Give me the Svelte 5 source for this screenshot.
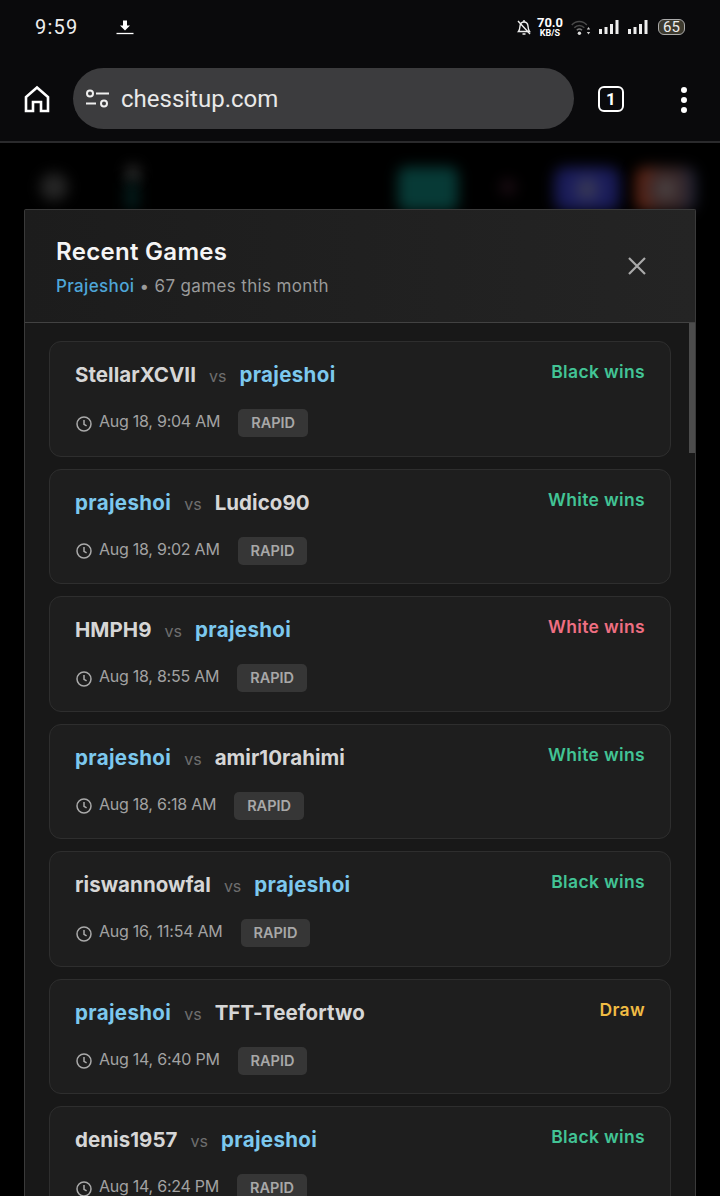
<script>
  const games = [
    { w: 'StellarXCVII', b: 'prajeshoi', youWhite: false, res: 'Black wins', kind: 'win', time: 'Aug 18, 9:04 AM' },
    { w: 'prajeshoi', b: 'Ludico90', youWhite: true, res: 'White wins', kind: 'win', time: 'Aug 18, 9:02 AM' },
    { w: 'HMPH9', b: 'prajeshoi', youWhite: false, res: 'White wins', kind: 'loss', time: 'Aug 18, 8:55 AM' },
    { w: 'prajeshoi', b: 'amir10rahimi', youWhite: true, res: 'White wins', kind: 'win', time: 'Aug 18, 6:18 AM' },
    { w: 'riswannowfal', b: 'prajeshoi', youWhite: false, res: 'Black wins', kind: 'win', time: 'Aug 16, 11:54 AM' },
    { w: 'prajeshoi', b: 'TFT-Teefortwo', youWhite: true, res: 'Draw', kind: 'draw', time: 'Aug 14, 6:40 PM' },
    { w: 'denis1957', b: 'prajeshoi', youWhite: false, res: 'Black wins', kind: 'win', time: 'Aug 14, 6:24 PM' }
  ];
</script>

<div class="screen">
  <header class="chrome">
    <div class="status">
      <span class="clock">9:59</span>
      <svg class="dl" width="18" height="16" viewBox="0 0 18 16"><path d="M7 1.500h4v5h3L9 11.500 4 6.500h3z" fill="#fff"/><path d="M.5 14.500h17" stroke="#fff" stroke-width="1.300"/></svg>
      <span class="spacer"></span>
      <svg class="bell" width="16" height="17" viewBox="0 0 16 17" fill="none" stroke="#eee" stroke-width="1.400"><path d="M2.500 12.500c1.300-1.500 1.300-3.500 1.500-5.500C4.300 4.500 6 3 8 3s3.700 1.500 4 4c.2 2 .2 4 1.500 5.500z"/><path d="M6.500 15h3M8 1v2M2 2l12 13"/></svg>
      <span class="speed"><b>70.0</b><i>KB/S</i></span>
      <svg class="wifi" width="20" height="17" viewBox="0 0 20 17" fill="none"><path d="M.8 6c4-4.800 11-4.800 15 0" stroke="#4a4a4a" stroke-width="1.500"/><path d="M3.300 8.800c3-3.200 7-3.200 10 0" stroke="#4a4a4a" stroke-width="1.500"/><path d="M5.800 11.300c1.800-1.700 3.400-1.700 5.200 0" stroke="#777" stroke-width="1.500"/><circle cx="8.400" cy="14.300" r="1.700" fill="#ddd"/><path d="M17.500 8l-1.700 2.400h3.400zM17.500 15.500l-1.700-2.400h3.400z" fill="#ccc"/></svg>
      <svg class="sig" width="20" height="16" viewBox="0 0 20 16"><g fill="#eee"><rect x="0" y="10" width="3" height="5"/><rect x="5.500" y="8" width="3" height="7"/><rect x="11" y="5" width="3" height="10"/><rect x="16.500" y="1" width="3" height="14"/></g></svg>
      <svg class="sig two" width="20" height="16" viewBox="0 0 20 16"><g fill="#eee"><rect x="0" y="10" width="3" height="5"/><rect x="5.500" y="8" width="3" height="7"/><rect x="11" y="5" width="3" height="10"/><rect x="16.500" y="1" width="3" height="14"/></g></svg>
      <span class="batt">65</span>
    </div>
    <div class="toolbar">
      <svg class="home" width="26" height="28" viewBox="0 0 26 28" fill="none" stroke="#fff" stroke-width="2.600"><path d="M2 26V12L13 2.500 24 12v14h-7v-9H9v9z"/></svg>
      <div class="omni">
        <svg width="25" height="20" viewBox="0 0 25 20" fill="none" stroke="#eee" stroke-width="2"><circle cx="5" cy="4.500" r="3"/><path d="M11 4.500h13M1 14.500h10"/><circle cx="19" cy="14.500" r="3"/></svg>
        <span>chessitup.com</span>
      </div>
      <span class="tabs">1</span>
      <span class="dots"><i></i><i></i><i></i></span>
    </div>
  </header>

  <main class="page">
    <div class="blurs" aria-hidden="true">
      <i class="b1"></i><i class="b2"></i><i class="b3"></i><i class="b4"></i><i class="b7"></i><i class="b5"></i><i class="b6"></i>
    </div>
    <section class="modal">
      <div class="mhead">
        <div>
          <h2>Recent Games</h2>
          <p><span class="who">Prajeshoi</span> • 67 games this month</p>
        </div>
        <svg width="20" height="20" viewBox="0 0 20 20" stroke="#aaa" stroke-width="2.200" fill="none"><path d="M2 2l16 16M18 2L2 18"/></svg>
      </div>
      <div class="list">
        <div class="thumb"></div>
        {#each games as g}
          <article class="card">
            <div class="top">
              <div class="players">
                <span class:you={g.youWhite}>{g.w}</span>
                <em>vs</em>
                <span class:you={!g.youWhite}>{g.b}</span>
              </div>
              <span class="res {g.kind}">{g.res}</span>
            </div>
            <div class="meta">
              <svg width="18" height="18" viewBox="0 0 18 18" fill="none" stroke="#aaa" stroke-width="1.500"><circle cx="9" cy="9" r="7"/><path d="M9 5v4.300l2.600 1.600"/></svg>
              <time>{g.time}</time>
              <span class="tag">RAPID</span>
            </div>
          </article>
        {/each}
      </div>
    </section>
  </main>
</div>

<style>
  :global(body) { margin: 0; background: #000; }
  .screen { width: 720px; height: 1196px; overflow: hidden; display: flex; flex-direction: column; background: #000; font-family: Inter, "Liberation Sans", sans-serif; }
  .chrome { height: 141px; flex: none; background: #0a0a0c; border-bottom: 2px solid #2a2a2c; color: #fff; }
  .status { height: 54px; display: flex; align-items: center; padding: 0 35px; font-family: Roboto, sans-serif; }
  .clock { font-size: 20px; letter-spacing: 1.2px; color: #eee; width: 81px; }
  .spacer { flex: 1; }
  .bell { margin-right: 5px; }
  .speed { display: flex; flex-direction: column; align-items: center; width: 26px; margin-right: 8px; }
  .speed b { font-size: 13px; font-weight: 700; line-height: 13px; }
  .speed i { font-style: normal; font-size: 9px; font-weight: 700; line-height: 9px; }
  .wifi { margin-right: 8px; }
  .sig { margin-right: 9px; }
  .sig.two { margin-right: 10px; }
  .batt { width: 25px; height: 14px; border: 1.500px solid #aaa; border-radius: 6px; background: #3d3a2e; font-size: 15px; line-height: 14px; text-align: center; color: #eee; }
  .toolbar { height: 87px; display: flex; align-items: flex-start; position: relative; }
  .home { margin: 31px 0 0 24px; flex: none; }
  .omni { margin: 14px 0 0 23px; width: 501px; height: 61px; box-sizing: border-box; padding-left: 12px; border-radius: 31px; background: #3c3c3e; display: flex; align-items: center; gap: 11px; font-family: Roboto, sans-serif; font-size: 24px; color: #e8e8e8; }
  .tabs { margin: 32px 0 0 24px; width: 22px; height: 22px; border: 2.500px solid #fff; border-radius: 6px; font-family: Roboto, sans-serif; font-weight: 700; font-size: 17px; line-height: 22px; text-align: center; }
  .dots { margin: 33px 0 0 57px; display: flex; flex-direction: column; gap: 4px; }
  .dots i { width: 6px; height: 6px; border-radius: 50%; background: #fff; }
  .page { flex: 1; position: relative; padding: 66px 24px 0; min-height: 0; }
  .blurs i { position: absolute; filter: blur(7px); }
  .b1 { left: 40px; top: 30px; width: 28px; height: 28px; background: #262626; border-radius: 50%; }
  .b2 { left: 126px; top: 22px; width: 14px; height: 18px; background: #333; border-radius: 50%; }
  .b3 { left: 126px; top: 40px; width: 12px; height: 26px; background: #04201f; }
  .b4 { left: 398px; top: 24px; width: 60px; height: 44px; background: #073a36; border-radius: 8px; filter: blur(4px); }
  .b7 { left: 500px; top: 36px; width: 16px; height: 16px; background: #1c0d14; border-radius: 50%; }
  .b5 { left: 554px; top: 24px; width: 66px; height: 44px; background: radial-gradient(circle at 50% 50%, #45454f 0, #1c1e5e 40%, #14164a 100%); border-radius: 10px; filter: blur(4px); }
  .b6 { left: 636px; top: 24px; width: 60px; height: 44px; background: radial-gradient(circle at 50% 50%, #55504e 0, #3a2a2c 35%, transparent 75%), linear-gradient(90deg, #6a2410, #3a2320 60%, #1a2238); border-radius: 10px; filter: blur(4px); }
  .modal { position: relative; height: 100%; box-sizing: border-box; background: #1a1a1a; border: 1px solid #3a3a3a; border-bottom: 0; border-radius: 2px 2px 0 0; display: flex; flex-direction: column; overflow: hidden; }
  .mhead { flex: none; height: 113px; box-sizing: border-box; padding: 27px 48px 0 31px; display: flex; justify-content: space-between; align-items: flex-start; background: linear-gradient(90deg, #1c1c1c, #242424); border-bottom: 1px solid #424242; }
  .mhead svg { margin-top: 19px; }
  h2 { margin: 0; font-size: 24px; line-height: 30px; font-weight: 600; color: #f5f5f5; letter-spacing: 0.3px; }
  .mhead p { margin: 8px 0 0; font-size: 17px; line-height: 22px; color: #9a9a9a; letter-spacing: 0.35px; }
  .who { color: #4ea6d8; font-weight: 500; }
  .list { flex: 1; position: relative; padding: 18px 24px 0; display: flex; flex-direction: column; gap: 12px; background: #181818; overflow: hidden; }
  .thumb { position: absolute; right: 0; top: 0; width: 6px; height: 130px; background: #4c4c4c; }
  .card { flex: none; height: 115.500px; box-sizing: border-box; border: 1px solid #2e2e2e; border-radius: 12px; background: #1e1e1e; padding: 20px 25px 0; }
  .top { display: flex; justify-content: space-between; align-items: flex-start; }
  .players { display: flex; align-items: baseline; gap: 13px; font-size: 20.500px; line-height: 26px; font-weight: 650; color: #d6d6d6; letter-spacing: 0.05px; }
  .players em { font-style: normal; font-weight: 400; font-size: 16px; color: #6e6e6e; letter-spacing: 0; }
  .you { color: #7cc8ee; letter-spacing: 0.35px; }
  .res { font-size: 17.500px; line-height: 20px; font-weight: 600; letter-spacing: 0.35px; }
  .win { color: #42c495; }
  .loss { color: #ee6f82; }
  .draw { color: #f0bc44; }
  .meta { margin-top: 20px; display: flex; align-items: center; height: 28px; color: #a2a2a2; font-size: 16px; }
  .meta svg { margin-top: 1px; margin-right: 6px; }
  time { letter-spacing: -0.25px; margin-top: -4px; }
  .tag { margin-left: 18px; height: 28px; padding: 0 13px; border-radius: 5px; background: #363636; color: #a8a8a8; font-size: 14.500px; font-weight: 600; line-height: 28px; }
</style>
